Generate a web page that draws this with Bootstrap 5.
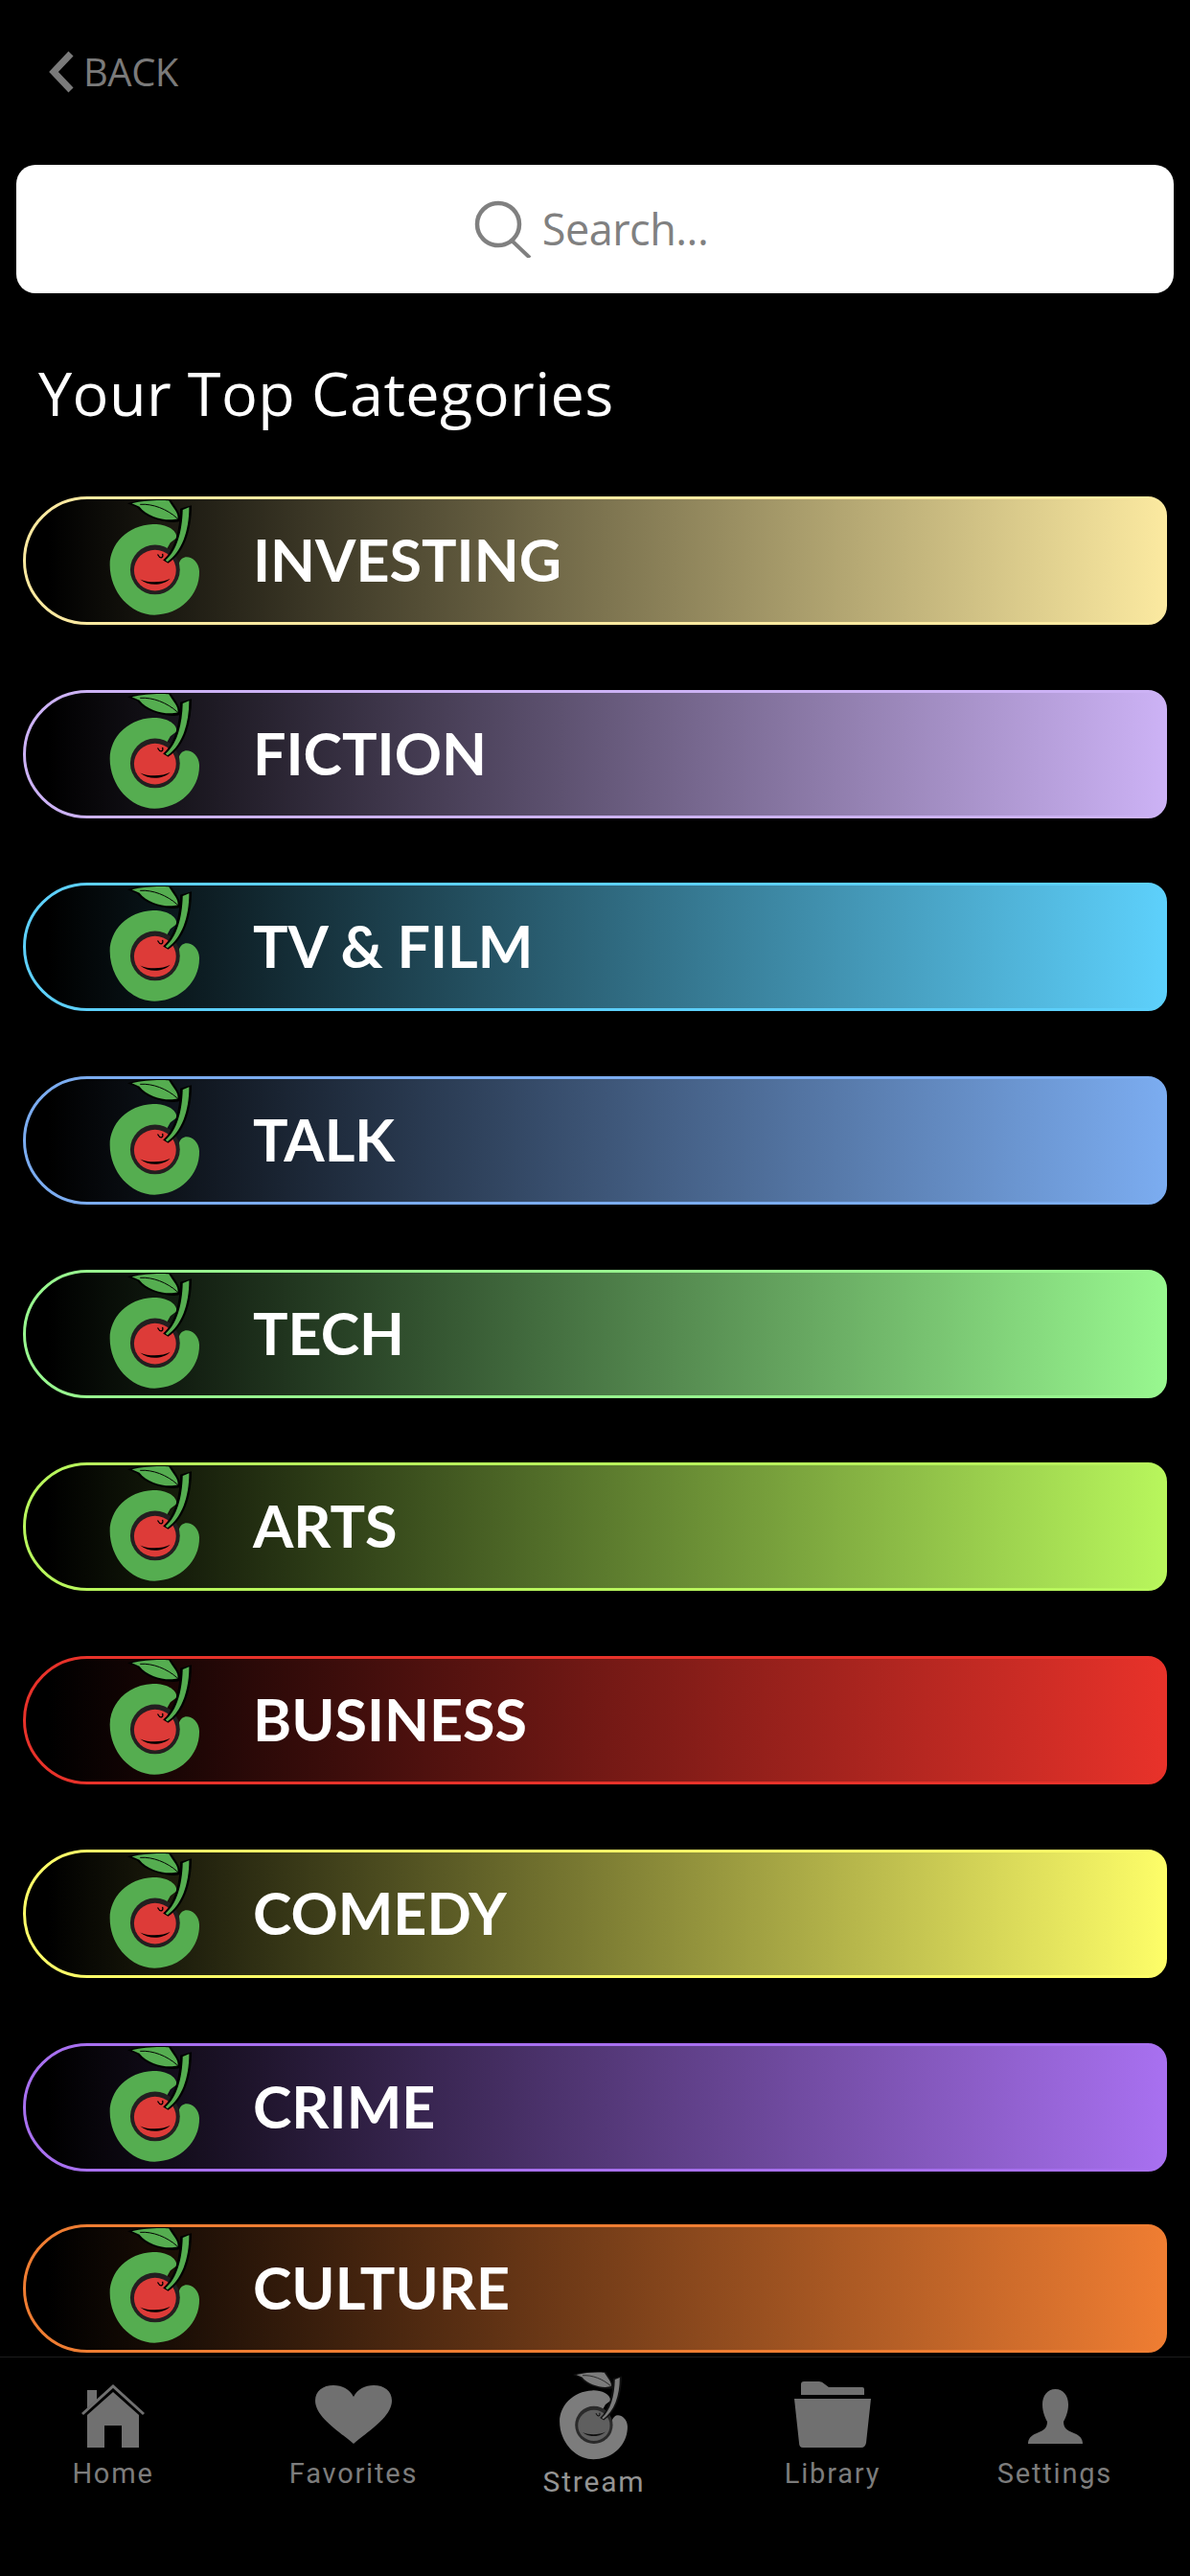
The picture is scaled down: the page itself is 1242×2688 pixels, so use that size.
<!DOCTYPE html>
<html lang="en">
<head>
    <meta charset="UTF-8">
    <meta name="viewport" content="width=device-width, initial-scale=1.0">
    <title>Categories</title>
    <link href="https://cdn.jsdelivr.net/npm/bootstrap@5.3.0/dist/css/bootstrap.min.css" rel="stylesheet">
    <style>
        body {
            background: #000;
            height: 2688px;
            overflow: hidden;
            font-family: "Open Sans", "Noto Sans", sans-serif;
            --logo-green: #55ad50;
            --logo-red: #dd3b38;
            --logo-dark: #231f20;
            --logo-line: #000;
        }
        .back-row { padding: 53px 0 0 51px; height: 172px; color: #7a7a7a; gap: 10px; }
        .back-row span { font-size: 40px; font-weight: 400; line-height: 44px; letter-spacing: -.5px; }
        .search-box { margin: 0 17px; padding-right: 8px; height: 134px; border-radius: 20px; gap: 11px; color: #808080; }
        .search-box span { font-size: 45px; font-weight: 400; letter-spacing: -.5px; }
        .page-title { color: #fff; font-size: 63px; font-weight: 400; line-height: 80px; margin: 0; padding: 64px 0 0 40px; height: 212px; letter-spacing: .4px; }
        .cat-list { margin: 0 24px; gap: 67.7px; }
        .cat-row {
            height: 134px;
            border: 3px solid var(--cat);
            border-radius: 67px 20px 20px 67px;
            background: linear-gradient(90deg, #000 2%, var(--cat) 100%);
            color: #fff;
            font-family: "Lato", sans-serif;
            font-size: 61px;
            font-weight: 700;
            line-height: 1;
            padding-bottom: 3px;
            text-decoration: none;
        }
        .cat-row svg { align-self: flex-start; margin: 0 53px 0 86px; flex: none; }
        .cat-row.last-row { margin-top: -12px; }
        .cat-investing { --cat: #fbe9a0; }
        .cat-fiction { --cat: #ccb2f5; }
        .cat-tv { --cat: #5dd0fb; }
        .cat-talk { --cat: #7bacf0; }
        .cat-tech { --cat: #98f78f; }
        .cat-arts { --cat: #b8f65c; }
        .cat-business { --cat: #e8322a; }
        .cat-comedy { --cat: #fdfd68; }
        .cat-crime { --cat: #a870f0; }
        .cat-culture { --cat: #ef7d32; }
        .tab-bar {
            margin-top: 4px;
            height: 229px;
            border-top: 1px solid #1c1c1c;
            padding-top: 2px;
            color: #707070;
            font-family: "Roboto", sans-serif;
            font-size: 29px;
            letter-spacing: 1.8px;
            --logo-green: #7c7c7c;
            --logo-red: #5f5f5f;
            --logo-dark: #2a2a2a;
            --logo-line: #111;
        }
        .tab-icon { height: 92px; display: flex; align-items: flex-end; justify-content: center; }
        .tab-item span { margin-top: 11px; line-height: 33px; color: #7c7c7c; }
        .tab-home { width: 236px; }
        .tab-fav { width: 266px; }
        .tab-stream { width: 232px; margin-top: 13px; padding-left: 4px; }
        .tab-lib { width: 270px; }
        .tab-set { width: 194px; }
        .tab-stream span { color: #949494; font-size: 30px; margin-top: 6px; }
    </style>
</head>
<body>
    <svg width="0" height="0" class="d-block">
        <symbol id="cherry" viewBox="0 0 295 365">
            <path d="M215 120C217 92 175 75 140 77C60 80 5 140 5 205C5 290 70 362 145 362C225 362 288 300 286 225C285 190 250 170 232 185C220 195 220 210 222 225L147 220L195 135Z" style="fill:var(--logo-green)"/>
            <circle cx="147" cy="220" r="78" style="fill:var(--logo-dark)"/>
            <ellipse cx="147" cy="222" rx="66" ry="64" style="fill:var(--logo-red)"/>
            <path d="M100 250C125 272 170 272 195 248C170 262 125 262 100 250Z" style="fill:var(--logo-line)"/>
            <path d="M155 172C165 190 175 180 170 170" style="fill:none;stroke:var(--logo-line);stroke-width:4"/>
            <path d="M172 190C208 160 224 100 226 28L262 18C262 100 236 170 188 200Z" style="fill:var(--logo-line)"/>
            <path d="M180 190C216 160 232 100 234 32L254 24C254 100 230 165 186 195Z" style="fill:var(--logo-green)"/>
            <path d="M60 12C90 0 170 -4 196 0C212 26 232 48 224 68C190 78 120 62 90 24Z" style="fill:var(--logo-line)"/>
            <path d="M74 12C110 2 165 0 190 3C204 26 222 44 218 60C185 70 125 56 98 22Z" style="fill:var(--logo-green)"/>
            <path d="M100 15C140 12 185 30 216 58" style="fill:none;stroke:var(--logo-line);stroke-width:3"/>
        </symbol>
    </svg>

    <div class="back-row d-flex align-items-start">
        <svg width="26" height="44" viewBox="0 0 26 44"><path d="M23 3L5 22L23 41" fill="none" stroke="#7a7a7a" stroke-width="7"/></svg>
        <span>BACK</span>
    </div>

    <div class="search-box bg-white d-flex align-items-center justify-content-center">
        <svg width="60" height="60" viewBox="0 0 60 60"><circle cx="25" cy="25" r="22" fill="none" stroke="#808080" stroke-width="4.5"/><path d="M38 41L58 60" fill="none" stroke="#808080" stroke-width="4"/></svg>
        <span>Search...</span>
    </div>

    <h1 class="page-title">Your Top Categories</h1>

    <div id="catList" class="cat-list d-flex flex-column">
        <a class="cat-row cat-investing d-flex align-items-center" href="#"><svg width="98" height="122"><use href="#cherry"/></svg>INVESTING</a>
        <a class="cat-row cat-fiction d-flex align-items-center" href="#"><svg width="98" height="122"><use href="#cherry"/></svg>FICTION</a>
        <a class="cat-row cat-tv d-flex align-items-center" href="#"><svg width="98" height="122"><use href="#cherry"/></svg>TV &amp; FILM</a>
        <a class="cat-row cat-talk d-flex align-items-center" href="#"><svg width="98" height="122"><use href="#cherry"/></svg>TALK</a>
        <a class="cat-row cat-tech d-flex align-items-center" href="#"><svg width="98" height="122"><use href="#cherry"/></svg>TECH</a>
        <a class="cat-row cat-arts d-flex align-items-center" href="#"><svg width="98" height="122"><use href="#cherry"/></svg>ARTS</a>
        <a class="cat-row cat-business d-flex align-items-center" href="#"><svg width="98" height="122"><use href="#cherry"/></svg>BUSINESS</a>
        <a class="cat-row cat-comedy d-flex align-items-center" href="#"><svg width="98" height="122"><use href="#cherry"/></svg>COMEDY</a>
        <a class="cat-row cat-crime d-flex align-items-center" href="#"><svg width="98" height="122"><use href="#cherry"/></svg>CRIME</a>
        <a class="cat-row cat-culture last-row d-flex align-items-center" href="#"><svg width="98" height="122"><use href="#cherry"/></svg>CULTURE</a>
    </div>

    <nav class="tab-bar d-flex align-items-start">
        <div class="tab-item tab-home d-flex flex-column align-items-center">
            <div class="tab-icon">
                <svg width="66" height="67" viewBox="0 0 66 67" fill="#707070"><path d="M33 9L60 33V67H42V44H24V67H6V33Z"/><path d="M1 32L33 3L65 32" fill="none" stroke="#707070" stroke-width="3"/><path d="M6 7H16V17L6 26Z"/></svg>
            </div>
            <span>Home</span>
        </div>
        <div class="tab-item tab-fav d-flex flex-column align-items-center">
            <div class="tab-icon">
                <svg width="80" height="61" viewBox="0 0 80 61" fill="#707070" class="mb-1"><path d="M40 61C25 48 0 33 0 16C0 6 8 0 19 0C28 0 36 4 40 12C44 4 52 0 61 0C72 0 80 6 80 16C80 33 55 48 40 61Z"/></svg>
            </div>
            <span>Favorites</span>
        </div>
        <div class="tab-item tab-stream d-flex flex-column align-items-center">
            <div class="tab-icon">
                <svg width="78" height="92"><use href="#cherry"/></svg>
            </div>
            <span>Stream</span>
        </div>
        <div class="tab-item tab-lib d-flex flex-column align-items-center">
            <div class="tab-icon">
                <svg width="80" height="69" viewBox="0 0 80 69" fill="#707070"><path d="M7 13V3Q7 0 10 0H26Q29 0 32 3L36 6H71Q73 6 73 8V14H7Z"/><path d="M0 18H80L75 64Q74 69 70 69H9Q5 69 5 64Z"/></svg>
            </div>
            <span>Library</span>
        </div>
        <div class="tab-item tab-set d-flex flex-column align-items-center">
            <div class="tab-icon">
                <svg width="57" height="57" viewBox="0 0 57 57" fill="#707070" class="mb-1"><path d="M28.5 0C37 0 42 7 42 16C42 24 39 30 37 34C37 40 40 43 48 46C53 48 57 51 57 57H0C0 51 4 48 9 46C17 43 20 40 20 34C18 30 15 24 15 16C15 7 20 0 28.5 0Z"/></svg>
            </div>
            <span>Settings</span>
        </div>
    </nav>

    <script src="https://cdn.jsdelivr.net/npm/bootstrap@5.3.0/dist/js/bootstrap.bundle.min.js"></script>
</body>
</html>
